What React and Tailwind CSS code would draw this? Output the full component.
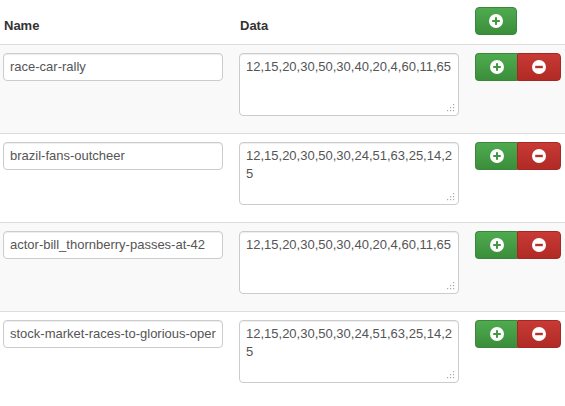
import React from "react";

const rows = [
  { name: "race-car-rally", data: ["12,15,20,30,50,30,40,20,4,60,11,65"] },
  { name: "brazil-fans-outcheer", data: ["12,15,20,30,50,30,24,51,63,25,14,2", "5"] },
  { name: "actor-bill_thornberry-passes-at-42", data: ["12,15,20,30,50,30,40,20,4,60,11,65"] },
  { name: "stock-market-races-to-glorious-oper", data: ["12,15,20,30,50,30,24,51,63,25,14,2", "5"] },
];

function PlusIcon({ color }) {
  return (
    <svg width="14" height="14" viewBox="0 0 14 14">
      <circle cx="7" cy="7" r="7" fill="#fff" />
      <rect x="6" y="3.2" width="2" height="7.6" fill={color} />
      <rect x="3.2" y="6" width="7.6" height="2" fill={color} />
    </svg>
  );
}

function MinusIcon({ color }) {
  return (
    <svg width="14" height="14" viewBox="0 0 14 14">
      <circle cx="7" cy="7" r="7" fill="#fff" />
      <rect x="3.2" y="5.8" width="7.6" height="2.4" fill={color} />
    </svg>
  );
}

function Grip() {
  return (
    <svg width="8" height="8" viewBox="0 0 8 8" className="absolute right-[3px] bottom-[3px]">
      {[[6, 0], [6, 3], [3, 3], [6, 6], [3, 6], [0, 6]].map(([x, y], i) => (
        <rect key={i} x={x} y={y} width="1.2" height="1.2" fill="#aaa" />
      ))}
    </svg>
  );
}

const green = "bg-[linear-gradient(to_bottom,#4fab4f,#3b8e3b)] border border-[#3a873a]";
const red = "bg-[linear-gradient(to_bottom,#c83a35,#b02a26)] border border-[#a52824]";

export default function App() {
  return (
    <div className="w-[565px] h-[406px] bg-white text-[#333] text-[13px] leading-[18px] font-['Liberation_Sans',Arial,sans-serif]">
      <div className="flex items-end h-[45px] pl-[3px] pb-[9px] border-b border-[#ddd]">
        <div className="w-[236px] font-bold pl-[1px]">Name</div>
        <div className="w-[236px] font-bold pl-[1px]">Data</div>
        <button className={`w-[42px] h-[28px] rounded-[4px] flex items-center justify-center ${green}`}>
          <PlusIcon color="#3f9a3f" />
        </button>
      </div>
      {rows.map((r, i) => (
        <div key={i} className={`flex items-start h-[89px] pl-[3px] pt-[8px] border-b border-[#ddd] ${i % 2 === 0 ? "bg-[#f9f9f9]" : "bg-white"} ${i === rows.length - 1 ? "border-b-0" : ""}`}>
          <div className="w-[236px]">
            <div className="w-[220px] h-[28px] px-[6px] flex items-center bg-white border border-[#ccc] rounded-[4px] shadow-[inset_0_1px_1px_rgba(0,0,0,0.075)] text-[#555] whitespace-nowrap overflow-hidden">
              {r.name}
            </div>
          </div>
          <div className="w-[236px]">
            <div className="relative w-[220px] h-[63px] px-[6px] py-[4px] bg-white border border-[#ccc] rounded-[4px] shadow-[inset_0_1px_1px_rgba(0,0,0,0.075)] text-[#555]">
              {r.data.map((l, j) => (
                <div key={j} className="whitespace-nowrap">{l}</div>
              ))}
              <Grip />
            </div>
          </div>
          <div className="flex">
            <button className={`w-[42px] h-[28px] rounded-l-[4px] flex items-center justify-center ${green} border-r-0`}>
              <PlusIcon color="#3f9a3f" />
            </button>
            <button className={`w-[44px] h-[28px] rounded-r-[4px] flex items-center justify-center ${red}`}>
              <MinusIcon color="#b8302b" />
            </button>
          </div>
        </div>
      ))}
    </div>
  );
}
